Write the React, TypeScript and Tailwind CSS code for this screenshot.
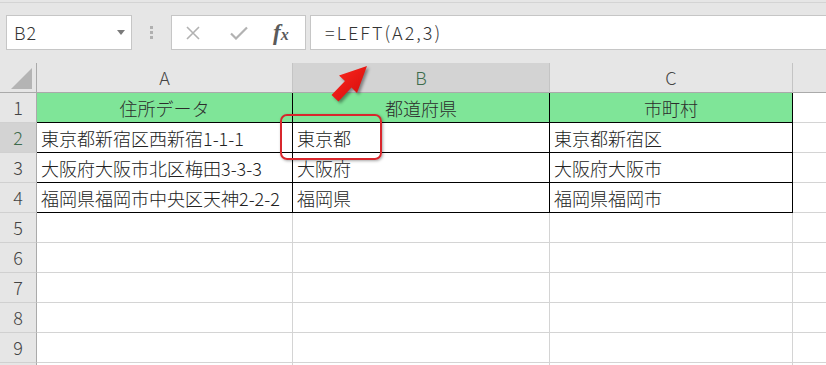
import React from "react";

const columns = [
  { label: "A", width: "w-[256px]" },
  { label: "B", width: "w-[257px]" },
  { label: "C", width: "w-[243px]" },
  { label: "", width: "w-[33px]" },
];

const rows: string[][] = [
  ["住所データ", "都道府県", "市町村"],
  ["東京都新宿区西新宿1-1-1", "東京都", "東京都新宿区"],
  ["大阪府大阪市北区梅田3-3-3", "大阪府", "大阪府大阪市"],
  ["福岡県福岡市中央区天神2-2-2", "福岡県", "福岡県福岡市"],
  [],
  [],
  [],
  [],
  [],
  [],
];

function FormulaBar() {
  return (
    <div className="flex h-[35px] pl-[6px]">
      <div className="flex w-[126px] items-center justify-between border border-[#c6c6c6] bg-white pl-[7px] pr-[6px]">
        <span className="text-[18px] tracking-[1px] text-[#333]">B2</span>
        <svg width="8" height="5" viewBox="0 0 8 5">
          <path d="M0 0h8L4 5z" fill="#7a7a7a" />
        </svg>
      </div>
      <div className="flex w-[39px] flex-col items-center justify-center gap-[2px]">
        <span className="h-[3px] w-[3px] bg-[#b0b0b0]" />
        <span className="h-[3px] w-[3px] bg-[#b0b0b0]" />
        <span className="h-[3px] w-[3px] bg-[#b0b0b0]" />
      </div>
      <div className="flex w-[135px] items-center border border-[#c6c6c6] bg-white">
        <svg className="ml-[14px]" width="14" height="14" viewBox="0 0 14 14">
          <path d="M1 1L13 13M13 1L1 13" stroke="#b2b2b2" strokeWidth="1.6" />
        </svg>
        <svg className="ml-[30px]" width="18" height="14" viewBox="0 0 18 14">
          <path d="M1 7.5L6 12.5L17 1.5" stroke="#b2b2b2" strokeWidth="2.2" fill="none" />
        </svg>
        <span className="ml-[25px] font-['Liberation_Serif',serif] text-[23px] font-bold italic leading-none text-[#5a5a5a]">
          f<span className="text-[16px]">x</span>
        </span>
      </div>
      <div className="ml-[4px] flex flex-1 items-center border border-r-0 border-[#c6c6c6] bg-white pl-[14px]">
        <span className="text-[18px] tracking-[2px] text-[#333]">=LEFT(A2,3)</span>
      </div>
    </div>
  );
}

function HeaderRow() {
  return (
    <div className="flex h-[30px]">
      <div className="flex w-[37px] items-end justify-end border-r border-b border-[#aaaaaa] bg-[#e6e6e6] pr-[4px] pb-[3px]">
        <svg width="21" height="21" viewBox="0 0 21 21">
          <path d="M21 0V21H0z" fill="#b4b4b4" />
        </svg>
      </div>
      {columns.map((col, i) => (
        <div
          key={"col-" + i}
          className={
            col.width +
            " flex items-center justify-center border-b border-b-[#aaaaaa] text-[18px] " +
            (i < 3 ? "border-r border-r-[#c4c4c4] " : "") +
            (col.label === "B" ? "bg-[#d3d3d3] text-[#3d6b4c]" : "bg-[#e6e6e6] text-[#444]")
          }
        >
          {col.label}
        </div>
      ))}
    </div>
  );
}

export default function App() {
  return (
    <div className="relative h-[365px] w-[826px] overflow-hidden bg-[#e6e6e6] font-['Noto_Sans_CJK_JP','Noto_Sans',sans-serif] font-light">
      <div className="h-[2px]" />
      <div className="h-px bg-[#d4d4d4]" />
      <div className="h-[12px]" />
      <FormulaBar />
      <div className="h-[13px]" />
      <HeaderRow />
      {rows.map((cells, r) => (
        <div key={"row-" + r} className="flex h-[30px]">
          <div
            className={
              "flex w-[37px] items-center justify-center border-r border-b border-r-[#aaaaaa] border-b-[#d0d0d0] text-[18px] " +
              (r === 1 ? "bg-[#d3d3d3] text-[#3d6b4c]" : "bg-[#e6e6e6] text-[#444]")
            }
          >
            {r < 9 ? r + 1 : ""}
          </div>
          {columns.map((col, c) => {
            const inTable = r < 4 && c < 3;
            const text = cells[c] ?? "";
            return (
              <div
                key={"cell-" + r + "-" + c}
                className={
                  col.width +
                  " flex items-center whitespace-nowrap border-b text-[18px] leading-none " +
                  (c < 3 ? "border-r " : "") +
                  (inTable ? "border-black " : "border-[#d4d4d4] ") +
                  (r === 0 && inTable
                    ? "justify-center bg-[#7fe598] text-[#2c2c2c]"
                    : "bg-white pl-[4px] text-[#222]")
                }
              >
                {text}
              </div>
            );
          })}
        </div>
      ))}

      <div className="absolute left-[280px] top-[114px] h-[46px] w-[102px] rounded-[7px] border-2 border-[#d8262c] shadow-[1px_1px_3px_rgba(0,0,0,0.35)]" />

      <svg
        className="pointer-events-none absolute left-0 top-0 drop-shadow-[2px_2px_1.5px_rgba(0,0,0,0.4)]"
        width="826"
        height="365"
        viewBox="0 0 826 365"
      >
        <defs>
          <linearGradient id="arrowFill" x1="0" y1="0" x2="1" y2="1">
            <stop offset="0" stopColor="#ff2a1f" />
            <stop offset="1" stopColor="#d10a0a" />
          </linearGradient>
        </defs>
        <polygon
          points="367,66 339,75.5 345,81 331.5,95 338.5,101.5 351.5,87.5 357,93"
          fill="url(#arrowFill)"
        />
      </svg>
    </div>
  );
}
